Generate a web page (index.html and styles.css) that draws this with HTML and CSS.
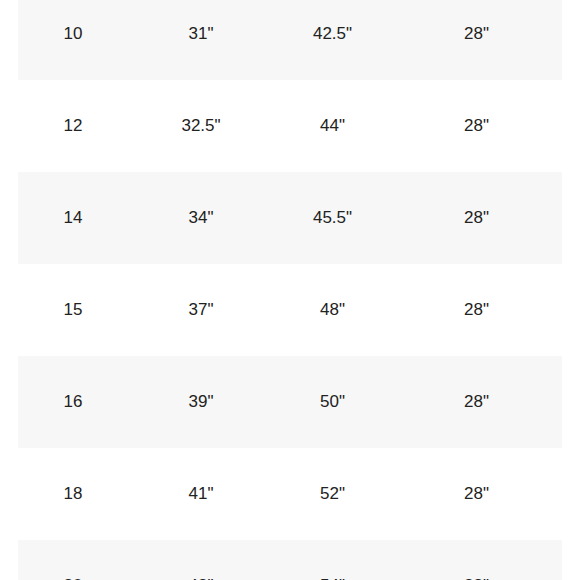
FILE: index.html
```html
<!DOCTYPE html>
<html>
<head>
<meta charset="utf-8">
<link rel="stylesheet" href="styles.css">
</head>
<body>
<div class="size-table">
  <div class="row alt"><span>10</span><span>31"</span><span>42.5"</span><span>28"</span></div>
  <div class="row"><span>12</span><span>32.5"</span><span>44"</span><span>28"</span></div>
  <div class="row alt"><span>14</span><span>34"</span><span>45.5"</span><span>28"</span></div>
  <div class="row"><span>15</span><span>37"</span><span>48"</span><span>28"</span></div>
  <div class="row alt"><span>16</span><span>39"</span><span>50"</span><span>28"</span></div>
  <div class="row"><span>18</span><span>41"</span><span>52"</span><span>28"</span></div>
  <div class="row alt"><span>20</span><span>43"</span><span>54"</span><span>28"</span></div>
</div>
</body>
</html>
```
FILE: styles.css
```css
html, body {
  margin: 0;
  padding: 0;
  background: #ffffff;
  overflow: hidden;
}
.size-table {
  margin: -12px 18px 0 18px;
  font-family: "Liberation Sans", Arial, sans-serif;
  font-size: 17px;
  color: #222222;
}
.row {
  display: grid;
  grid-template-columns: 110px 146px 117px 1fr;
  height: 92px;
  align-items: center;
  text-align: center;
  background: #ffffff;
}
.row.alt {
  background: #f7f7f7;
}
```
